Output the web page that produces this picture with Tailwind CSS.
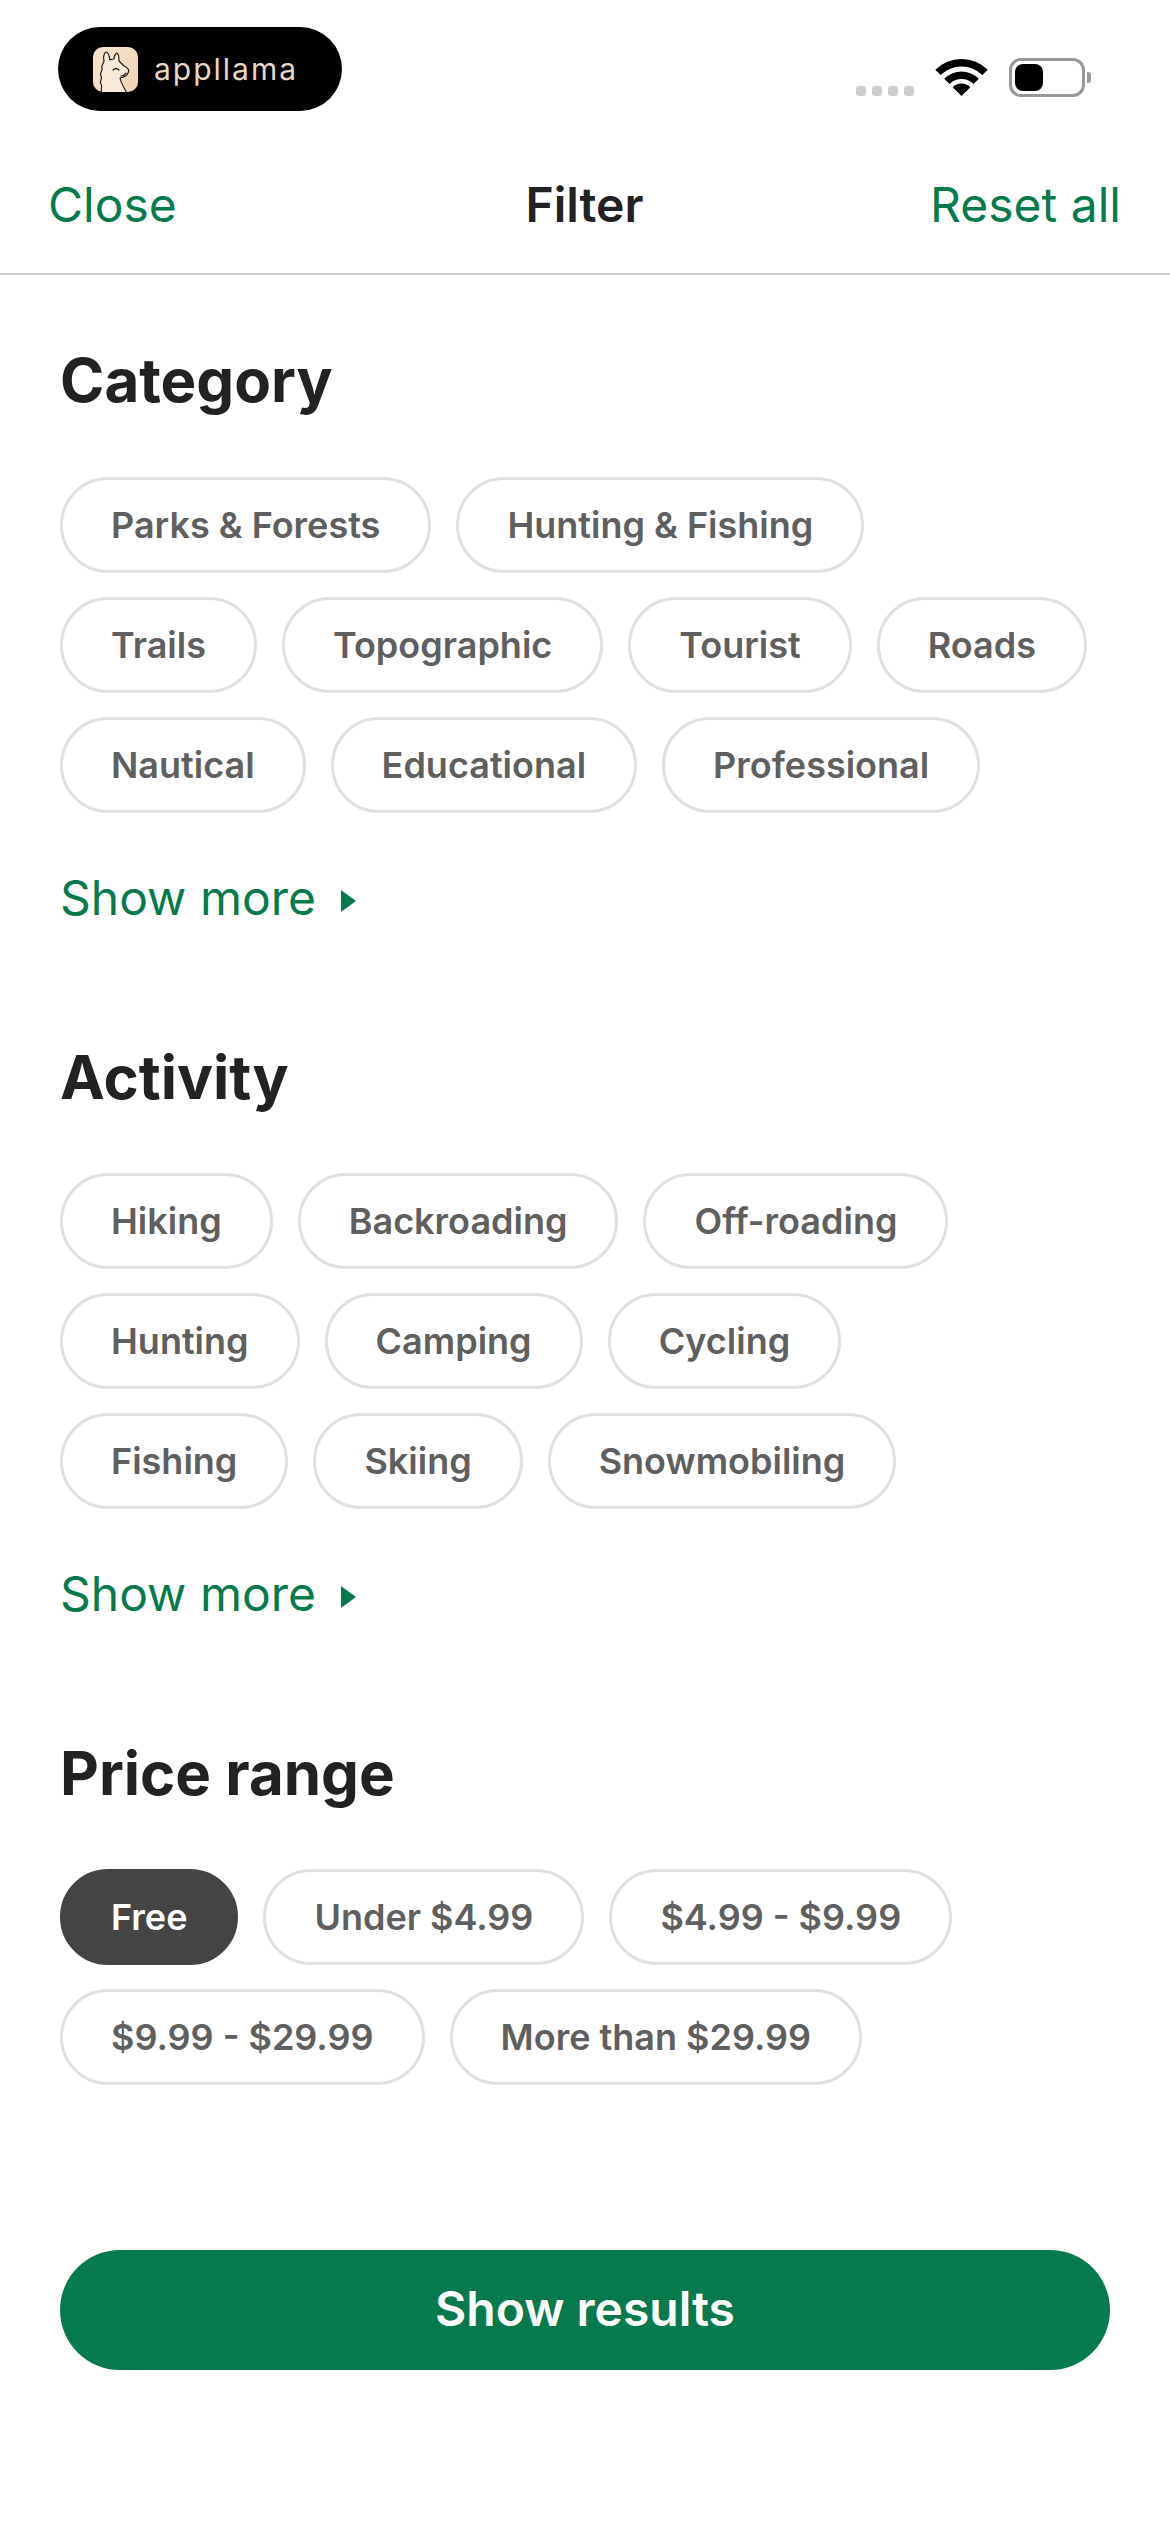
<!DOCTYPE html>
<html lang="en">
<head>
  <meta charset="UTF-8" />
  <meta name="viewport" content="width=device-width, initial-scale=1.0"/>
  <title>Filter</title>
  <script src="https://cdn.jsdelivr.net/npm/@tailwindcss/browser@4"></script>
</head>
<body class="bg-white font-['Inter',sans-serif] text-[#222222]">
  <div class="w-[1170px] h-[2532px] overflow-hidden">

    <!-- status bar -->
    <div class="h-[140px] flex items-start justify-between pl-[58px] pr-[79px]">
      <div class="mt-[27px] w-[284px] h-[84px] rounded-full bg-black flex items-center pl-[35px] gap-[16px]">
        <svg width="45" height="45" viewBox="0 0 45 45">
          <defs>
            <linearGradient id="tile" x1="0" y1="0" x2="1" y2="1">
              <stop offset="0" stop-color="#f8e6d0"/>
              <stop offset="1" stop-color="#efd3b3"/>
            </linearGradient>
            <clipPath id="tileClip"><rect width="45" height="45" rx="10"/></clipPath>
          </defs>
          <rect width="45" height="45" rx="10" fill="url(#tile)"/>
          <g clip-path="url(#tileClip)">
            <path d="M9 46C7 42 10 40 8 37C6 34 10 32 8 29C6 26 10 24 9 21C8 18 11 16 11 14C10 10 11 6 13 5C16 5 16 10 17 13C19 12 20 12 21 12C21 9 23 6 24 6C26 7 26 11 26 14C28 16 29 17 31 19C34 20 37 23 35 26C34 29 31 30 27 31C28 36 31 41 34 46Z" fill="#f9ead8" stroke="#1c1c1c" stroke-width="1.2" stroke-linejoin="round"/>
            <path d="M20 23Q23 20 26 23M28 29Q31 29 33 26" fill="none" stroke="#1c1c1c" stroke-width="1.2" stroke-linecap="round"/>
          </g>
        </svg>
        <span class="text-[30px] leading-none font-normal tracking-[2px] text-[#e8d8c6]">appllama</span>
      </div>
      <div class="flex items-start">
        <div class="mt-[86px] mr-[22px] flex gap-[6px]">
          <span class="w-[10px] h-[10px] rounded-[3px] bg-[#cccccc]"></span>
          <span class="w-[10px] h-[10px] rounded-[3px] bg-[#cccccc]"></span>
          <span class="w-[10px] h-[10px] rounded-[3px] bg-[#cccccc]"></span>
          <span class="w-[10px] h-[10px] rounded-[3px] bg-[#cccccc]"></span>
        </div>
        <svg class="mt-[59px] mr-[22px] overflow-visible" width="51" height="37" viewBox="0 0 51 37">
          <path d="M-.7 10.8A37 37 0 0 1 51.7 10.8L46.4 16.1A29.5 29.5 0 0 0 4.6 16.1Z"/>
          <path d="M8.2 19.7A24.5 24.5 0 0 1 42.8 19.7L37.5 25A17 17 0 0 0 13.5 25Z"/>
          <path d="M16.7 28.2A12.5 12.5 0 0 1 34.3 28.2L25.5 37Z"/>
        </svg>
        <div class="mt-[58px] flex items-center">
          <div class="w-[76px] h-[39px] border-[3px] border-[#999999] rounded-[12px] p-[3px]">
            <div class="w-[28px] h-[27px] bg-black rounded-[8px]"></div>
          </div>
          <span class="ml-[2px] w-[4px] h-[11px] rounded-r-[3px] bg-[#999999]"></span>
        </div>
      </div>
    </div>

    <!-- nav -->
    <div class="h-[135px] pb-[3px] grid grid-cols-3 items-center pl-[48px] pr-[49px] border-b-[2px] border-[#cccccc] text-[48px] text-[#067a4c]">
      <span>Close</span>
      <span class="text-center font-semibold text-[#222222]">Filter</span>
      <span class="text-right">Reset all</span>
    </div>

    <div class="px-[60px]">
      <!-- category -->
      <h2 class="mt-[69px] text-[60px] leading-[72px] font-bold">Category</h2>
      <div class="mt-[61px] flex flex-col gap-y-[24px]">
        <div class="flex gap-x-[25px]">
          <span class="h-[96px] px-[48px] flex items-center rounded-full border-[3px] border-[#e0e0e0] text-[36px] font-semibold text-[#5f5f5f]">Parks &amp; Forests</span>
          <span class="h-[96px] px-[48px] flex items-center rounded-full border-[3px] border-[#e0e0e0] text-[36px] font-semibold text-[#5f5f5f]">Hunting &amp; Fishing</span>
        </div>
        <div class="flex gap-x-[25px]">
          <span class="h-[96px] px-[48px] flex items-center rounded-full border-[3px] border-[#e0e0e0] text-[36px] font-semibold text-[#5f5f5f]">Trails</span>
          <span class="h-[96px] px-[48px] flex items-center rounded-full border-[3px] border-[#e0e0e0] text-[36px] font-semibold text-[#5f5f5f]">Topographic</span>
          <span class="h-[96px] px-[48px] flex items-center rounded-full border-[3px] border-[#e0e0e0] text-[36px] font-semibold text-[#5f5f5f]">Tourist</span>
          <span class="h-[96px] px-[48px] flex items-center rounded-full border-[3px] border-[#e0e0e0] text-[36px] font-semibold text-[#5f5f5f]">Roads</span>
        </div>
        <div class="flex gap-x-[25px]">
          <span class="h-[96px] px-[48px] flex items-center rounded-full border-[3px] border-[#e0e0e0] text-[36px] font-semibold text-[#5f5f5f]">Nautical</span>
          <span class="h-[96px] px-[48px] flex items-center rounded-full border-[3px] border-[#e0e0e0] text-[36px] font-semibold text-[#5f5f5f]">Educational</span>
          <span class="h-[96px] px-[48px] flex items-center rounded-full border-[3px] border-[#e0e0e0] text-[36px] font-semibold text-[#5f5f5f]">Professional</span>
        </div>
      </div>
      <div class="mt-[55px] h-[60px] flex items-center text-[48px] text-[#067a4c]">
        <span>Show more</span>
        <svg class="ml-[25px] mt-[6px]" width="15" height="22" viewBox="0 0 15 22"><path d="M0 0L15 11L0 22Z" fill="#067a4c"/></svg>
      </div>

      <!-- activity -->
      <h2 class="mt-[113px] text-[60px] leading-[72px] font-bold">Activity</h2>
      <div class="mt-[60px] flex flex-col gap-y-[24px]">
        <div class="flex gap-x-[25px]">
          <span class="h-[96px] px-[48px] flex items-center rounded-full border-[3px] border-[#e0e0e0] text-[36px] font-semibold text-[#5f5f5f]">Hiking</span>
          <span class="h-[96px] px-[48px] flex items-center rounded-full border-[3px] border-[#e0e0e0] text-[36px] font-semibold text-[#5f5f5f]">Backroading</span>
          <span class="h-[96px] px-[48px] flex items-center rounded-full border-[3px] border-[#e0e0e0] text-[36px] font-semibold text-[#5f5f5f]">Off-roading</span>
        </div>
        <div class="flex gap-x-[25px]">
          <span class="h-[96px] px-[48px] flex items-center rounded-full border-[3px] border-[#e0e0e0] text-[36px] font-semibold text-[#5f5f5f]">Hunting</span>
          <span class="h-[96px] px-[48px] flex items-center rounded-full border-[3px] border-[#e0e0e0] text-[36px] font-semibold text-[#5f5f5f]">Camping</span>
          <span class="h-[96px] px-[48px] flex items-center rounded-full border-[3px] border-[#e0e0e0] text-[36px] font-semibold text-[#5f5f5f]">Cycling</span>
        </div>
        <div class="flex gap-x-[25px]">
          <span class="h-[96px] px-[48px] flex items-center rounded-full border-[3px] border-[#e0e0e0] text-[36px] font-semibold text-[#5f5f5f]">Fishing</span>
          <span class="h-[96px] px-[48px] flex items-center rounded-full border-[3px] border-[#e0e0e0] text-[36px] font-semibold text-[#5f5f5f]">Skiing</span>
          <span class="h-[96px] px-[48px] flex items-center rounded-full border-[3px] border-[#e0e0e0] text-[36px] font-semibold text-[#5f5f5f]">Snowmobiling</span>
        </div>
      </div>
      <div class="mt-[55px] h-[60px] flex items-center text-[48px] text-[#067a4c]">
        <span>Show more</span>
        <svg class="ml-[25px] mt-[6px]" width="15" height="22" viewBox="0 0 15 22"><path d="M0 0L15 11L0 22Z" fill="#067a4c"/></svg>
      </div>

      <!-- price -->
      <h2 class="mt-[113px] text-[60px] leading-[72px] font-bold">Price range</h2>
      <div class="mt-[60px] flex flex-col gap-y-[24px]">
        <div class="flex gap-x-[25px]">
          <span class="h-[96px] px-[48px] flex items-center rounded-full border-[3px] border-[#444444] bg-[#444444] text-[36px] font-semibold text-white">Free</span>
          <span class="h-[96px] px-[48px] flex items-center rounded-full border-[3px] border-[#e0e0e0] text-[36px] font-semibold text-[#5f5f5f]">Under $4.99</span>
          <span class="h-[96px] px-[48px] flex items-center rounded-full border-[3px] border-[#e0e0e0] text-[36px] font-semibold text-[#5f5f5f]">$4.99 - $9.99</span>
        </div>
        <div class="flex gap-x-[25px]">
          <span class="h-[96px] px-[48px] flex items-center rounded-full border-[3px] border-[#e0e0e0] text-[36px] font-semibold text-[#5f5f5f]">$9.99 - $29.99</span>
          <span class="h-[96px] px-[48px] flex items-center rounded-full border-[3px] border-[#e0e0e0] text-[36px] font-semibold text-[#5f5f5f]">More than $29.99</span>
        </div>
      </div>

      <button class="block mt-[165px] w-[1050px] h-[120px] pb-[3px] rounded-[60px] bg-[#067a4c] text-white text-[48px] font-semibold">Show results</button>
    </div>
  </div>
</body>
</html>
